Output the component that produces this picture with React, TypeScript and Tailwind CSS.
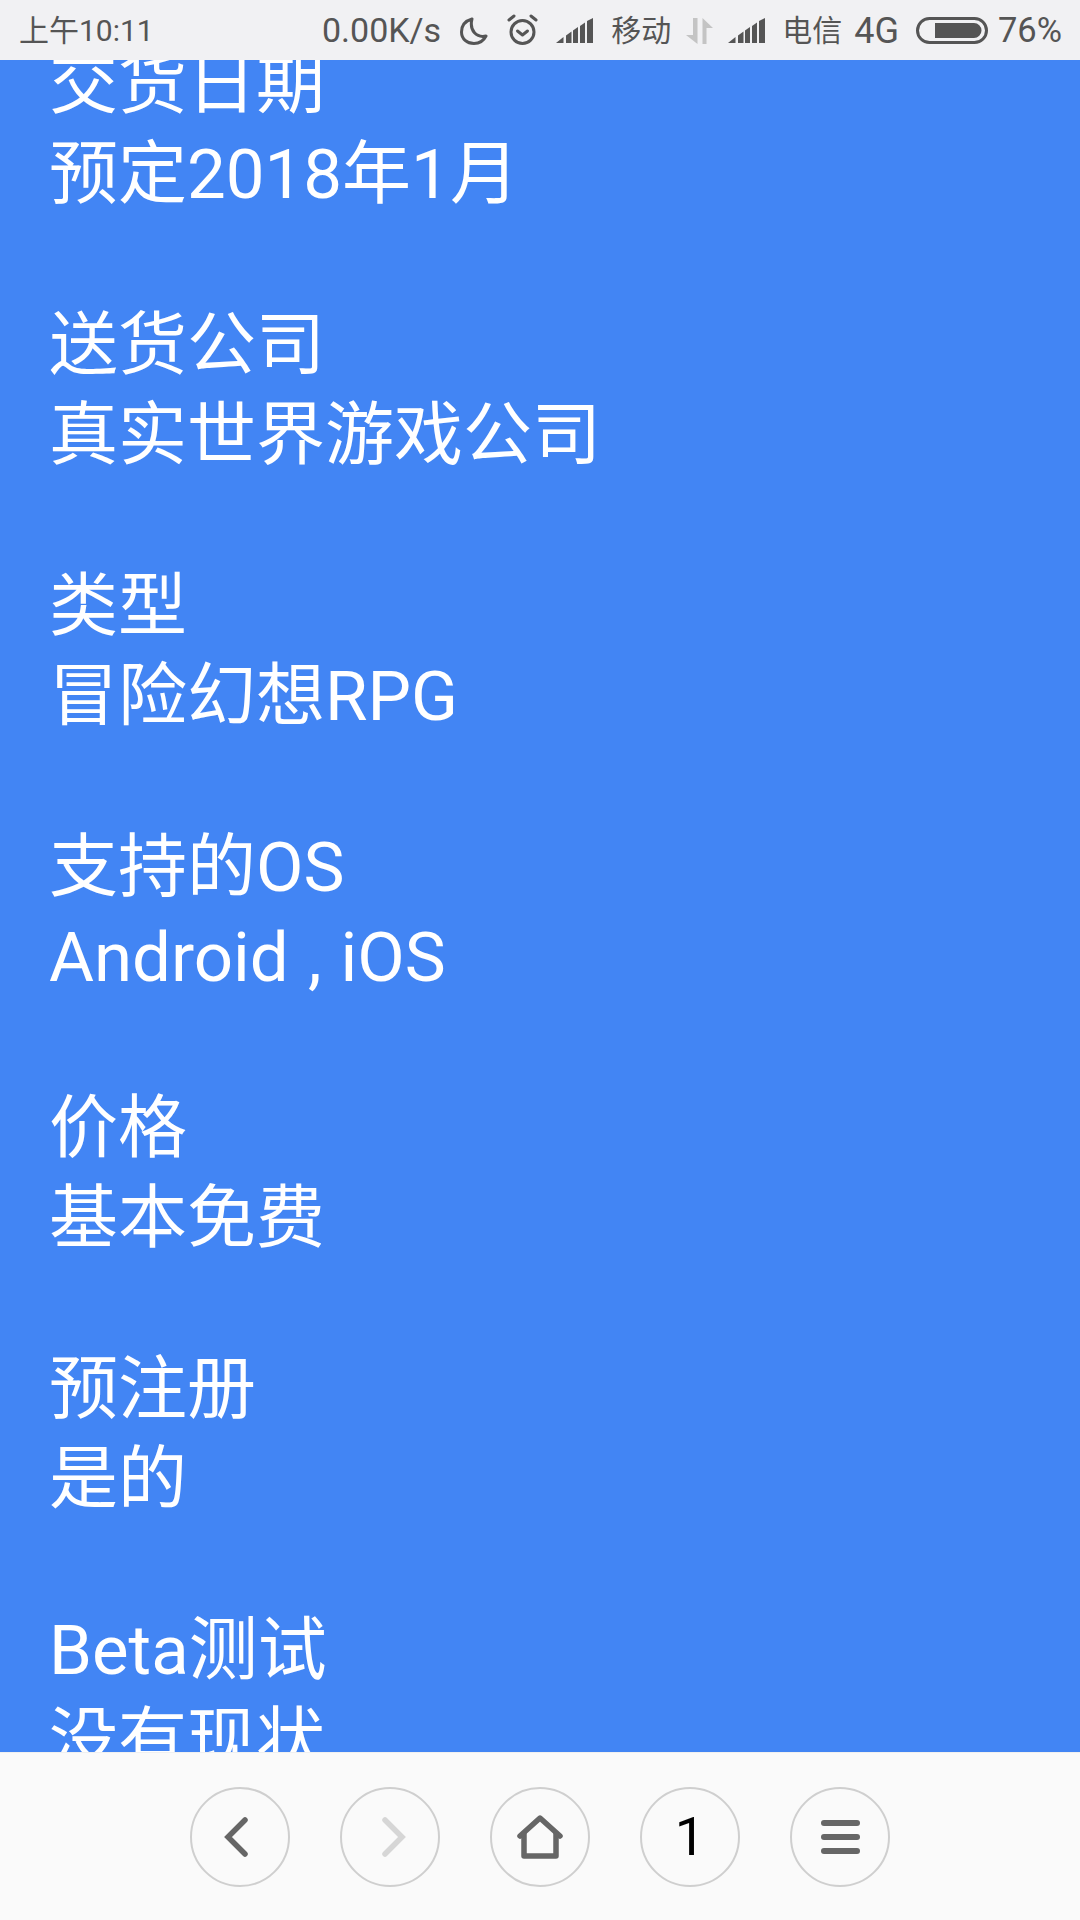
const SPECS = [
  { label: "送货公司", value: "真实世界游戏公司" },
  { label: "类型", value: "冒险幻想RPG" },
  { label: "支持的OS", value: "Android , iOS" },
  { label: "价格", value: "基本免费" },
  { label: "预注册", value: "是的" },
  { label: "Beta测试", value: "没有现状" },
];

function Signal() {
  return (
    <svg width="37" height="25" viewBox="0 0 37 25" fill="#555">
      <path d="M0 25 L7.5 19 V25 Z" />
      <path d="M10 17.5 L15.5 13.5 V25 H10 Z" />
      <path d="M17 12.5 L22 9 V25 H17 Z" />
      <path d="M24 8 L29 4.5 V25 H24 Z" />
      <path d="M31 3 L37 0 V25 H31 Z" />
    </svg>
  );
}

function StatusBar() {
  return (
    <div className="flex h-[60px] shrink-0 items-center justify-between bg-[#f1f1f3] pl-[19px] pr-[18px] pt-[1px] text-[30px] text-[#555]">
      <span>上午10:11</span>
      <div className="flex items-center">
        <span className="text-[34px]">0.00K/s</span>
        <svg className="ml-[19px]" width="28" height="28" viewBox="0 0 28 28" fill="none" stroke="#555" strokeWidth="3" strokeLinejoin="round">
          <path d="M12 2 C5 4 1.5 9 1.5 15 C1.5 22 7 26.5 14 26.5 C20 26.5 24 23 26 19 C17 21 9 14 12 2 Z" />
        </svg>
        <svg className="mb-[2px] ml-[19px]" width="31" height="32" viewBox="0 0 31 32" fill="none" stroke="#555" strokeWidth="3" strokeLinecap="round" strokeLinejoin="round">
          <circle cx="15.5" cy="18" r="11.5" />
          <path d="M10.5 17 L15.5 21 L20.5 17" />
          <path d="M2 6 L7 2 M24 2 L29 6" />
        </svg>
        <span className="ml-[18px]"><Signal /></span>
        <span className="ml-[18px]">移动</span>
        <svg className="ml-[15px]" width="27" height="26" viewBox="0 0 27 26" fill="#c4c4c4">
          <path d="M7 0 H11.5 V26 L0 17 H7 Z" />
          <path d="M16.5 0 L27 10 H20.5 V26 H16.5 Z" />
        </svg>
        <span className="ml-[15px]"><Signal /></span>
        <span className="ml-[17px]">电信</span>
        <span className="ml-[12px] text-[36px]">4G</span>
        <svg className="ml-[17px]" width="72" height="27" viewBox="0 0 72 27" fill="none">
          <rect x="1.5" y="1.5" width="69" height="24" rx="12" stroke="#555" strokeWidth="3" />
          <path d="M19 6 H58 A7.5 7.5 0 0 1 58 21 H19 Z" fill="#555" />
        </svg>
        <span className="ml-[10px] text-[34.5px]">76%</span>
      </div>
    </div>
  );
}

function Article() {
  return (
    <div className="min-h-0 flex-1 overflow-hidden bg-[#4285f4] pl-[49px] text-[69px] leading-[90px] text-white [word-spacing:2px]">
      <div className="-mt-[20px]">
        <div>交货日期</div>
        <div>预定2018年1月</div>
      </div>
      {SPECS.map((s) => (
        <div key={s.label} className="mt-[81px]">
          <div>{s.label}</div>
          <div>{s.value}</div>
        </div>
      ))}
    </div>
  );
}

function NavButton({ children }: { children: React.ReactNode }) {
  return (
    <div className="flex h-[100px] w-[100px] items-center justify-center rounded-full border-2 border-[#cfcfcf]">
      {children}
    </div>
  );
}

function BottomNav() {
  return (
    <div className="flex h-[168px] shrink-0 items-center justify-center gap-[50px] border-t border-[#f0f0f0] bg-[#fafafa]">
      <NavButton>
        <svg width="44" height="44" viewBox="0 0 44 44" fill="none" stroke="#666" strokeWidth="5.5" strokeLinecap="round" strokeLinejoin="miter">
          <path d="M27 5 L10 22 L27 39" />
        </svg>
      </NavButton>
      <NavButton>
        <svg width="44" height="44" viewBox="0 0 44 44" fill="none" stroke="#d6d6d6" strokeWidth="5.5" strokeLinecap="round" strokeLinejoin="miter">
          <path d="M17 5 L34 22 L17 39" />
        </svg>
      </NavButton>
      <NavButton>
        <svg width="46" height="44" viewBox="0 0 46 44" fill="none" stroke="#666" strokeWidth="5.5" strokeLinecap="round" strokeLinejoin="round">
          <path d="M3 21 L23 3 L43 21" />
          <path d="M7 19 V41 H39 V19" />
        </svg>
      </NavButton>
      <NavButton>
        <span className="text-[54px] leading-none text-black">1</span>
      </NavButton>
      <NavButton>
        <div className="flex flex-col gap-[8px]">
          <div className="h-[6px] w-[39px] rounded-full bg-[#666]" />
          <div className="h-[6px] w-[39px] rounded-full bg-[#666]" />
          <div className="h-[6px] w-[39px] rounded-full bg-[#666]" />
        </div>
      </NavButton>
    </div>
  );
}

export default function App() {
  return (
    <div className="flex h-[1920px] w-[1080px] flex-col overflow-hidden font-['Roboto','Noto_Sans_CJK_SC',sans-serif]">
      <StatusBar />
      <Article />
      <BottomNav />
    </div>
  );
}
